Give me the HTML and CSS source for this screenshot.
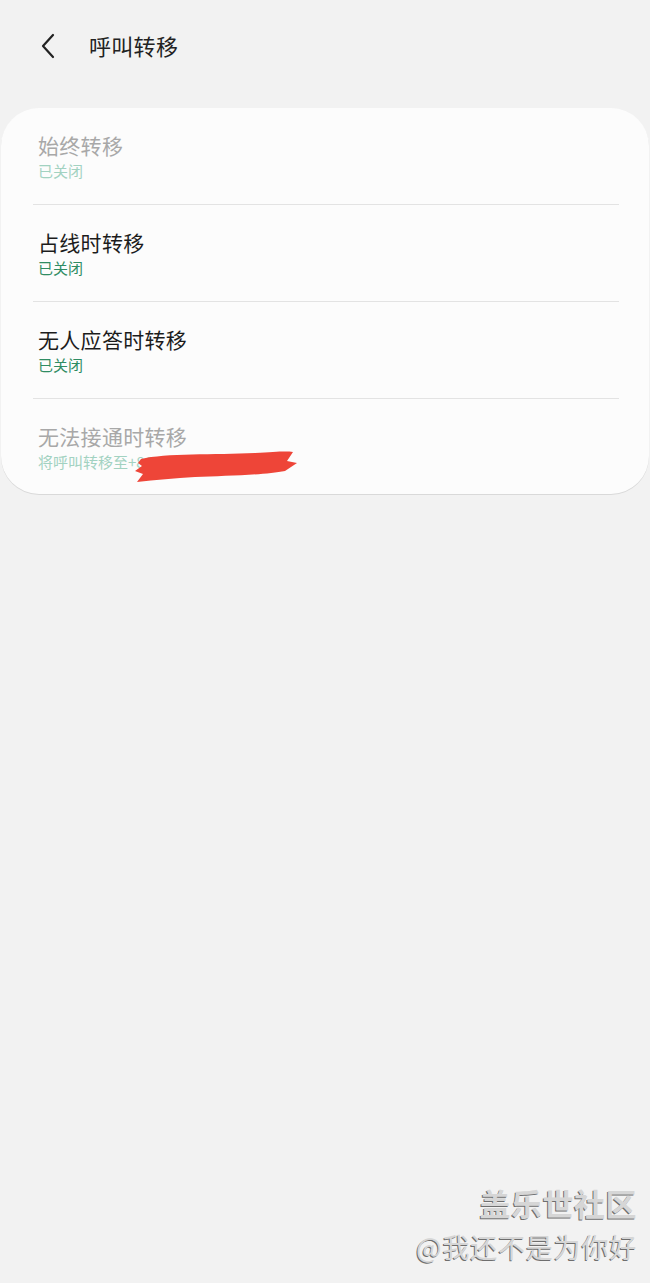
FILE: index.html
```html
<!DOCTYPE html>
<html lang="zh">
<head>
<meta charset="utf-8">
<link rel="stylesheet" href="styles.css">
</head>
<body>
<div class="page">
  <header class="topbar">
    <svg class="back" width="20" height="26" viewBox="0 0 20 26"><path d="M13 2 L3 13 L13 24" fill="none" stroke="#222" stroke-width="2.2" stroke-linecap="round" stroke-linejoin="round"/></svg>
    <h1 class="title">呼叫转移</h1>
  </header>
  <section class="card">
    <div class="row disabled">
      <div class="row-title">始终转移</div>
      <div class="row-sub">已关闭</div>
    </div>
    <div class="row">
      <div class="row-title">占线时转移</div>
      <div class="row-sub">已关闭</div>
    </div>
    <div class="row">
      <div class="row-title">无人应答时转移</div>
      <div class="row-sub">已关闭</div>
    </div>
    <div class="row disabled last">
      <div class="row-title">无法接通时转移</div>
      <div class="row-sub">将呼叫转移至+<span class="hidden-num">86</span>
        <svg class="scribble" width="166" height="34" viewBox="0 0 166 34"><path d="M6 10 C30 4 80 6 120 4 C140 3 150 2 158 3 L152 12 L162 14 L150 22 C130 26 90 27 60 28 C40 29 20 31 2 33 L8 25 L0 22 L7 17 L3 14 Z" fill="#ee4538"/></svg>
      </div>
    </div>
  </section>
  <div class="watermark">
    <div class="wm-big">盖乐世社区</div>
    <div class="wm-small">@我还不是为你好</div>
  </div>
</div>
</body>
</html>
```
FILE: styles.css
```css
html, body {
  margin: 0;
  padding: 0;
}
body {
  background: #f2f2f2;
  font-family: "Noto Sans CJK SC", "Noto Sans", sans-serif;
  width: 650px;
  height: 1283px;
  overflow: hidden;
}
.page {
  position: relative;
  height: 1283px;
}
.topbar {
  height: 90px;
  display: flex;
  align-items: center;
  padding-left: 40px;
  box-sizing: border-box;
}
.back {
  display: block;
  margin-top: 2px;
}
.title {
  margin: 0 0 0 29px;
  font-size: 22px;
  font-weight: 400;
  color: #222;
  letter-spacing: 0.3px;
}
.card {
  margin: 18px 1px 0 1px;
  background: #fcfcfc;
  border-radius: 38px;
  box-shadow: 0 1px 0 #d9d9d9;
  padding: 0 30px 0 32px;
}
.row {
  padding: 24px 0 23px 5px;
  border-bottom: 1px solid #e3e3e3;
  position: relative;
}
.row.last {
  border-bottom: none;
  padding-bottom: 22px;
}
.row-title {
  font-size: 21px;
  line-height: 26px;
  color: #1c1c1c;
  letter-spacing: 0.3px;
}
.row-sub {
  margin-top: 3px;
  font-size: 15px;
  line-height: 20px;
  color: #2f8c63;
  position: relative;
}
.disabled .row-title {
  color: #a8a8a8;
}
.disabled .row-sub {
  color: #a2d2c1;
}
.hidden-num {
  color: #a2d2c1;
}
.scribble {
  position: absolute;
  left: 97px;
  top: -3px;
}
.watermark {
  position: absolute;
  right: 13px;
  top: 1182px;
  text-align: right;
  color: #d6d6d6;
  text-shadow: -1px 1px 0 #6e6e6e;
}
.wm-big {
  font-size: 31px;
  font-weight: 700;
  line-height: 42px;
  letter-spacing: 0.5px;
}
.wm-small {
  font-size: 27px;
  line-height: 40px;
  margin-top: 3px;
  letter-spacing: 0.8px;
}
```
